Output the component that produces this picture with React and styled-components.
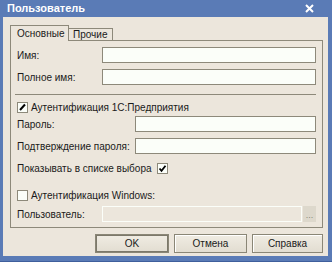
import React from 'react';
import styled, { createGlobalStyle } from 'styled-components';

const Global = createGlobalStyle`
	html, body {
		margin: 0;
		padding: 0;
		background: #ffffff;
	}
	* {
		box-sizing: border-box;
	}
`;

const Window = styled.div`
	width: 332px;
	height: 262px;
	background: #5a7bb6;
	padding: 0 4px 5px 3px;
	display: flex;
	flex-direction: column;
	font-family: 'Liberation Sans', Arial, sans-serif;
	font-size: 10px;
	color: #1a1a1a;
	border-bottom: 1px solid #3f5f9c;
`;

const TitleBar = styled.div`
	height: 17px;
	display: flex;
	align-items: center;
	justify-content: space-between;
	padding: 0 14px 1px 4px;
	color: #fff;
	font-weight: bold;
	font-size: 11px;
`;

const Body = styled.div`
	flex: 1;
	background: #ece6dc;
	padding: 8px 5px 0 7px;
	display: flex;
	flex-direction: column;
`;

const TabStrip = styled.div`
	display: flex;
	align-items: flex-end;
	height: 16px;
	position: relative;
	z-index: 1;
	margin-bottom: -1px;
`;

const Tab = styled.div`
	height: ${(p) => (p.$active ? '16px' : '13px')};
	padding: 0 ${(p) => (p.$active ? '6px' : '4px')};
	display: flex;
	align-items: center;
	background: #ece6dc;
	border: 1px solid #8d897a;
	border-bottom: ${(p) => (p.$active ? 'none' : '1px solid #8d897a')};
	border-left: ${(p) => (p.$active ? '1px solid #8d897a' : 'none')};
	width: ${(p) => p.$w}px;
	white-space: nowrap;
`;

const Panel = styled.div`
	height: 188px;
	border: 1px solid #8d897a;
	padding: 6px 6px 0 6px;
	display: flex;
	flex-direction: column;
`;

const Row = styled.div`
	display: flex;
	align-items: center;
	height: 16px;
	margin-top: ${(p) => p.$mt || 0}px;
`;

const Label = styled.div`
	width: ${(p) => p.$w}px;
	flex-shrink: 0;
	white-space: nowrap;
`;

const Input = styled.div`
	flex: 1;
	height: 16px;
	background: #fbfef9;
	border: 1px solid #8d897a;
`;

const DisabledInput = styled.div`
	flex: 1;
	height: 16px;
	background: #ece6dc;
	border: 1px solid #fbfef9;
`;

const DotsButton = styled.div`
	width: 13px;
	height: 16px;
	background: #ddd8cc;
	color: #8a867a;
	font-size: 9px;
	display: flex;
	align-items: flex-end;
	justify-content: center;
	padding-bottom: 2px;
	margin-left: 1px;
	line-height: 1;
`;

const Separator = styled.div`
	height: 1px;
	background: #8d897a;
	margin: 9px 0 0 -2px;
`;

const CheckLabel = styled.div`
	display: flex;
	align-items: center;
	gap: 3px;
	white-space: nowrap;
`;

const Box = styled.div`
	width: 11px;
	height: 11px;
	background: #fbfef9;
	border: 1px solid #8d897a;
	display: flex;
	align-items: center;
	justify-content: center;
	margin-left: ${(p) => p.$ml || 0}px;
`;

const Footer = styled.div`
	display: flex;
	justify-content: flex-end;
	margin-top: 6px;
`;

const Button = styled.div`
	width: ${(p) => p.$w}px;
	height: 19px;
	margin-left: ${(p) => p.$ml || 0}px;
	display: flex;
	align-items: center;
	justify-content: center;
	background: linear-gradient(#f0ece3, #e2ddd1);
	border: 1px solid #8a8676;
	box-shadow: ${(p) =>
		p.$default ? 'inset 0 0 0 1px #7c786a' : 'inset 1px 1px 0 #ffffff'};
`;

const Check = ({ bold }) => (
	<svg width="9" height="9" viewBox="0 0 9 9">
		<path
			d={bold ? 'M1.5 4.5 L3.5 6.8 L7.5 1.8' : 'M2 7 L7 1.5'}
			stroke="#000"
			strokeWidth={bold ? 1.8 : 2}
			fill="none"
		/>
	</svg>
);

const App = () => {
	return (
		<Window>
			<Global />
			<TitleBar>
				<span>Пользователь</span>
				<svg width="9" height="9" viewBox="0 0 9 9">
					<path d="M1 1 L8 8 M8 1 L1 8" stroke="#fff" strokeWidth="2" />
				</svg>
			</TitleBar>
			<Body>
				<TabStrip>
					<Tab $active $w={59}>Основные</Tab>
					<Tab $w={44}>Прочие</Tab>
				</TabStrip>
				<Panel>
					<Row>
						<Label $w={85}>Имя:</Label>
						<Input />
					</Row>
					<Row $mt={6}>
						<Label $w={85}>Полное имя:</Label>
						<Input />
					</Row>
					<Separator />
					<Row $mt={4}>
						<CheckLabel>
							<Box>
								<Check />
							</Box>
							Аутентификация 1С:Предприятия
						</CheckLabel>
					</Row>
					<Row $mt={1}>
						<Label $w={118}>Пароль:</Label>
						<Input />
					</Row>
					<Row $mt={6}>
						<Label $w={118}>Подтверждение пароля:</Label>
						<Input />
					</Row>
					<Row $mt={6}>
						<CheckLabel>
							Показывать в списке выбора
							<Box $ml={2}>
								<Check bold />
							</Box>
						</CheckLabel>
					</Row>
					<Row $mt={11}>
						<CheckLabel>
							<Box />
							Аутентификация Windows:
						</CheckLabel>
					</Row>
					<Row $mt={3}>
						<Label $w={85}>Пользователь:</Label>
						<DisabledInput />
						<DotsButton>...</DotsButton>
					</Row>
				</Panel>
				<Footer>
					<Button $default $w={74}>OK</Button>
					<Button $w={73} $ml={5}>Отмена</Button>
					<Button $w={71} $ml={5}>Справка</Button>
				</Footer>
			</Body>
		</Window>
	);
};

export default App;
